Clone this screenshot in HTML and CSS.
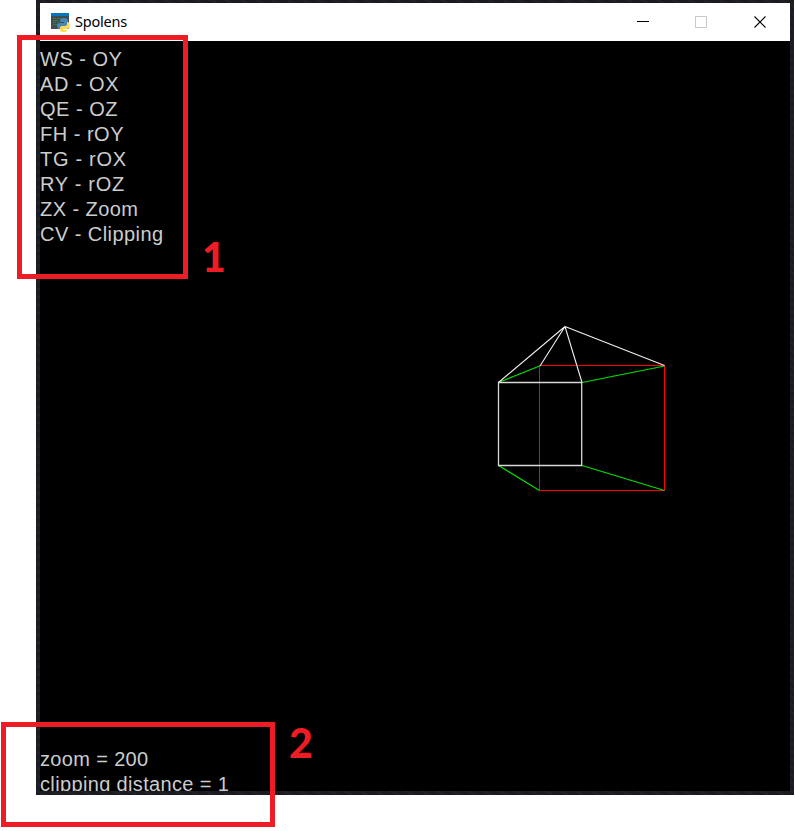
FILE: index.html
```html
<!DOCTYPE html>
<html lang="en">
<head>
<meta charset="utf-8">
<title>Spolens</title>
<link rel="stylesheet" href="styles.css">
</head>
<body>
<main class="window">
  <header class="titlebar">
    <svg class="app-icon" width="18" height="19" viewBox="0 0 18 19">
      <path fill="#424b50" d="M0 0h18v16H0z"/>
      <path fill="#0875bd" d="M0 0h18v3H0z"/>
      <path stroke="#2c8142" d="M2 5.500h3M6 5.500h4M2 7.500h5M2 9.500h3M6 9.500h2M2 11.500h4"/>
      <path fill="#4787b8" d="M9 8q0-3 4-3t4 3v3q0 2-2 2h-4q-1 0-1 3H8q-2-1-2-3.500T9 10h4V9H9z"/>
      <path fill="#ffd954" d="M16 9q3 0 3 3.500T16 16h-4v1h4q0 2-3.500 2T9 17v-2q0-2 2-2h3q2 0 2-2z"/>
    </svg>
    <h1 class="title">Spolens</h1>
    <svg class="controls" width="124" height="14" viewBox="0 0 124 14" fill="none">
      <path stroke="#000" d="M0 6.500h12"/>
      <path stroke="#c8c8c8" d="M58.500 1.500h11v11h-11z"/>
      <path stroke="#000" stroke-width="1.100" d="M117.500 1.500l11 11M128.500 1.500l-11 11"/>
    </svg>
  </header>
  <section class="viewport">
    <ul class="keys">
      <li>WS - OY</li>
      <li class="wide">AD - OX</li>
      <li>QE - OZ</li>
      <li>FH - rOY</li>
      <li class="wide">TG - rOX</li>
      <li class="wide">RY - rOZ</li>
      <li class="tight">ZX - Zoom</li>
      <li class="tight">CV - Clipping</li>
    </ul>
    <svg class="scene" width="170" height="168" viewBox="496 324 170 168" fill="none">
      <g fill="#ff0000">
        <rect x="539" y="365" width="126" height="1"/>
        <rect x="539" y="490" width="126" height="1"/>
        <rect x="539" y="365" width="1" height="126"/>
        <rect x="664" y="365" width="1" height="126"/>
      </g>
      <path stroke="#00e000" stroke-width="1.200" d="M498.500 382.500l41-16.500M582 382.500l82.500-16.500M498.500 465.500l41 25M582 465.500l82.500 25"/>
      <path stroke="#d8d8d8" stroke-width="1.300" d="M498.500 382.500h83.200v83h-83.200z"/>
      <path stroke="#f0f0f0" stroke-width="1.100" d="M565 326.500l-66.500 56M565 326.500l-25 39.500M565 326.500l17 56M565 326.500l99.500 39"/>
    </svg>
    <ul class="status">
      <li>zoom = 200</li>
      <li>clipping distance = 1</li>
    </ul>
  </section>
</main>
<div class="callout callout-keys"></div>
<span class="number number-keys">1</span>
<div class="callout callout-status"></div>
<span class="number number-status">2</span>
</body>
</html>
```
FILE: styles.css
```css
* {
  box-sizing: border-box;
}

body {
  position: relative;
  width: 795px;
  height: 831px;
  margin: 0;
  overflow: hidden;
  background: #fff;
  font-family: "Liberation Sans", Arial, sans-serif;
}

.window {
  width: 758px;
  height: 795px;
  margin-left: 36px;
  padding: 3px 4px 4px;
  background: repeating-linear-gradient(27deg, #1a1b20 0 2px, #212228 3px 4px, #1b1c21 5px 7px);
}

.titlebar {
  display: flex;
  align-items: center;
  height: 38px;
  padding: 0 24px 0 11px;
  background: #fff;
}

.app-icon {
  overflow: visible;
}

.title {
  margin: -2px auto 0 6px;
  font: 400 14.500px/20px "Noto Sans", "Open Sans", sans-serif;
  letter-spacing: -0.200px;
  color: #000;
}

.controls {
  margin-right: 5px;
  overflow: visible;
}

.viewport {
  display: flex;
  flex-direction: column;
  position: relative;
  height: 750px;
  padding-top: 6px;
  overflow: hidden;
  background: #000;
}

.keys,
.status {
  margin: 0;
  padding: 0;
  list-style: none;
  color: #cccccc;
  font-size: 20px;
  line-height: 25px;
  letter-spacing: 0.500px;
  white-space: nowrap;
}

.wide {
  letter-spacing: 0.700px;
}

.tight {
  letter-spacing: 0.440px;
}

.status {
  height: 44px;
  margin-top: auto;
  letter-spacing: 0.350px;
}

.scene {
  position: absolute;
  left: 456px;
  top: 283px;
}

.callout {
  position: absolute;
  border: 5px solid #ee1c24;
}

.callout-keys {
  left: 17px;
  top: 35px;
  width: 171px;
  height: 244px;
}

.callout-status {
  left: 1px;
  top: 722px;
  width: 274px;
  height: 105px;
}

.number {
  position: absolute;
  color: #ee1c24;
  font: 900 41px/48px Lato, sans-serif;
}

.number-keys {
  left: 202px;
  top: 233px;
}

.number-status {
  left: 289px;
  top: 719px;
}
```
